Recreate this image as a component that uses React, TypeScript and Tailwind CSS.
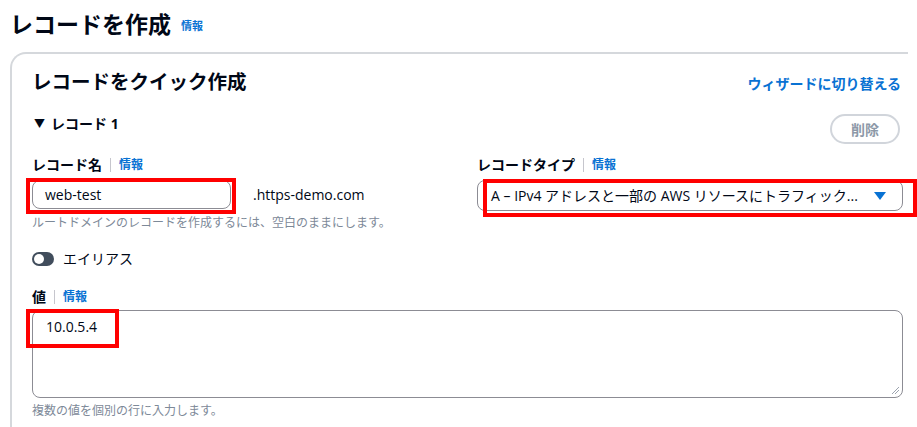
const font = { fontFamily: '"Open Sans", "Noto Sans CJK JP", sans-serif' }

function Info() {
  return (
    <span className="ml-2 border-l border-[#c6c6cd] pl-2 text-[12px] font-bold leading-[14px] text-[#0972d3]">
      情報
    </span>
  )
}

function Label({ text }: { text: string }) {
  return (
    <div className="flex h-[16px] items-center">
      <span className="text-[14px] font-bold leading-[16px] text-[#000716]">{text}</span>
      <Info />
    </div>
  )
}

export default function App() {
  return (
    <div
      className="relative h-[427px] w-[917px] overflow-hidden bg-white text-[#000716]"
      style={font}
    >
      <div className="flex h-[52px] items-start pl-[10px] pt-[8px]">
        <h1 className="text-[23px] font-bold leading-[32px]">レコードを作成</h1>
        <span className="ml-[10px] mt-[11px] text-[11px] font-bold leading-[14px] text-[#0972d3]">
          情報
        </span>
      </div>

      <div className="ml-[10px] w-[898px] rounded-tl-[16px] border-l-2 border-t-2 border-[#d5d8dc] pb-8 pl-[20px] pr-[5px]">
        <div className="flex items-start justify-between pt-[14px]">
          <h2 className="text-[19.5px] font-bold leading-[28px]">レコードをクイック作成</h2>
          <a className="mr-[2px] mt-[7px] text-[14px] font-bold leading-[18px] text-[#0972d3]">
            ウィザードに切り替える
          </a>
        </div>

        <div className="mt-[17px] flex items-start justify-between">
          <div className="mt-[3px] flex items-center gap-[6px] pl-[2px] text-[14px] font-bold leading-[16px]">
            <span className="text-[11px]">▼</span>
            <span>レコード 1</span>
          </div>
          <button
            type="button"
            className="mr-[3px] mt-[1px] flex h-[30px] w-[70px] items-center justify-center rounded-full border-2 border-[#d1d5db] text-[14px] font-bold text-[#8d99a8]"
          >
            削除
          </button>
        </div>

        <div className="mt-[13px] flex">
          <div className="w-[445px]">
            <Label text="レコード名" />
            <div className="mt-[7px] flex items-center">
              <div className="flex h-[29px] w-[199px] items-center rounded-[8px] border border-[#8c8c94] px-[12px] text-[14px]">
                web-test
              </div>
              <span className="ml-[22px] text-[14px]">.https-demo.com</span>
            </div>
            <p className="mt-[6px] text-[12px] leading-[16px] text-[#7d8998]">
              ルートドメインのレコードを作成するには、空白のままにします。
            </p>
          </div>
          <div className="flex-1">
            <Label text="レコードタイプ" />
            <div className="mt-[7px] flex h-[31px] w-[426px] items-center justify-between rounded-[8px] border border-[#8c8c94] pl-[13px] pr-[14px] text-[14px]">
              <span>A – IPv4 アドレスと一部の AWS リソースにトラフィック...</span>
              <svg width="12" height="8" viewBox="0 0 12 8" className="mr-[2px]">
                <path d="M0 0h12L6 8z" fill="#0972d3" />
              </svg>
            </div>
          </div>
        </div>

        <div className="mt-[20px] flex items-center">
          <div className="relative h-[14px] w-[22px] rounded-full bg-[#414d5c]">
            <span className="absolute left-[2px] top-[2px] h-[10px] w-[10px] rounded-full bg-white" />
          </div>
          <span className="ml-[9px] text-[14px] leading-[16px]">エイリアス</span>
        </div>

        <div className="mt-[22px]">
          <Label text="値" />
          <div className="relative mt-[5px] h-[88px] w-[871px] rounded-[8px] border border-[#8c8c94] px-[13px] pt-[6px] text-[14px] leading-[20px]">
            10.0.5.4
            <svg
              width="9"
              height="9"
              viewBox="0 0 9 9"
              className="absolute bottom-[2px] right-[2px]"
            >
              <path d="M1 8L8 1M4 8L8 4" stroke="#9ca3af" strokeWidth="1" />
            </svg>
          </div>
          <p className="mt-[5px] text-[12px] leading-[16px] text-[#7d8998]">
            複数の値を個別の行に入力します。
          </p>
        </div>
      </div>

      <div className="absolute left-[26px] top-[178px] h-[36px] w-[210px] border-4 border-[#ff0000]" />
      <div className="absolute left-[483px] top-[179px] h-[38px] w-[434px] border-4 border-[#ff0000]" />
      <div className="absolute left-[26px] top-[309px] h-[39px] w-[93px] border-4 border-[#ff0000]" />
    </div>
  )
}
